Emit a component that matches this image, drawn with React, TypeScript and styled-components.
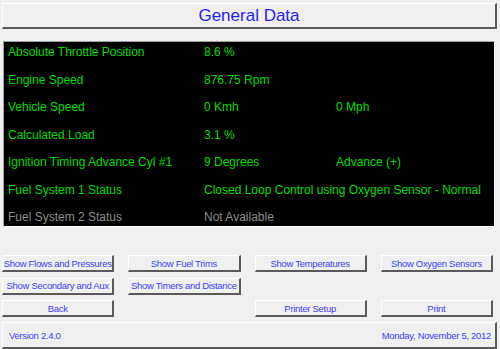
import styled, { createGlobalStyle } from "styled-components";

const GlobalStyle = createGlobalStyle`
  html, body {
    margin: 0;
    padding: 0;
    background: #f0f0f0;
    font-family: "Liberation Sans", Arial, sans-serif;
  }
`;

const Page = styled.div`
  width: 500px;
  height: 349px;
  box-sizing: border-box;
  padding: 3px 3px 0 2px;
  display: flex;
  flex-direction: column;
  overflow: hidden;
`;

const Raised = styled.div`
  box-sizing: border-box;
  background: #f0f0f0;
  border-top: 1px solid #ffffff;
  border-left: 1px solid #ffffff;
  border-right: 2px solid #5a5a5a;
  border-bottom: 2px solid #5a5a5a;
`;

const Header = styled(Raised)`
  height: 26px;
  display: flex;
  align-items: center;
  justify-content: center;
  color: #1f1fff;
  font-size: 17px;
`;

const Panel = styled.div`
  margin: 12px 2px 0 1px;
  height: 186px;
  box-sizing: border-box;
  background: #000;
  border-top: 1px solid #a0a0a0;
  border-left: 1px solid #a0a0a0;
  border-right: 1px solid #ffffff;
  border-bottom: 1px solid #ffffff;
  padding: 1px 0 0 4px;
  display: grid;
  grid-template-columns: 196px 132px 1fr;
  grid-auto-rows: 18px;
  row-gap: 9.5px;
  align-content: start;
`;

const Cell = styled.div<{ $dim?: boolean; $span?: boolean }>`
  font-size: 12px;
  line-height: 18px;
  white-space: nowrap;
  color: ${(p) => (p.$dim ? "#8c8c8c" : "#00dc00")};
  grid-column: ${(p) => (p.$span ? "span 2" : "auto")};
`;

const Buttons = styled.div`
  margin: 28px 4px 0 0;
  display: grid;
  grid-template-columns: repeat(4, 1fr);
  grid-auto-rows: 17px;
  column-gap: 14px;
  row-gap: 5.5px;
`;

const Button = styled(Raised)<{ $col: number; $row: number }>`
  grid-column: ${(p) => p.$col};
  grid-row: ${(p) => p.$row};
  display: flex;
  align-items: center;
  justify-content: center;
  font-size: 9.5px;
  letter-spacing: -0.3px;
  color: #4040ff;
  white-space: nowrap;
`;

const Footer = styled(Raised)`
  margin-top: 5px;
  height: 27px;
  display: flex;
  align-items: center;
  justify-content: space-between;
  padding: 0 4px 0 6px;
  font-size: 9.5px;
  letter-spacing: -0.3px;
  color: #4040ff;
`;

const rows: { label: string; value: string; extra?: string; dim?: boolean }[] = [
  { label: "Absolute Throttle Position", value: "8.6 %" },
  { label: "Engine Speed", value: "876.75 Rpm" },
  { label: "Vehicle Speed", value: "0 Kmh", extra: "0 Mph" },
  { label: "Calculated Load", value: "3.1 %" },
  { label: "Ignition Timing Advance Cyl #1", value: "9 Degrees", extra: "Advance (+)" },
  { label: "Fuel System 1 Status", value: "Closed Loop Control using Oxygen Sensor - Normal" },
  { label: "Fuel System 2 Status", value: "Not Available", dim: true },
];

const buttons = [
  { text: "Show Flows and Pressures", col: 1, row: 1 },
  { text: "Show Fuel Trims", col: 2, row: 1 },
  { text: "Show Temperatures", col: 3, row: 1 },
  { text: "Show Oxygen Sensors", col: 4, row: 1 },
  { text: "Show Secondary and Aux", col: 1, row: 2 },
  { text: "Show Timers and Distance", col: 2, row: 2 },
  { text: "Back", col: 1, row: 3 },
  { text: "Printer Setup", col: 3, row: 3 },
  { text: "Print", col: 4, row: 3 },
];

function App() {
  return (
    <Page>
      <GlobalStyle />
      <Header>General Data</Header>
      <Panel>
        {rows.map((r) => [
          <Cell key={r.label} $dim={r.dim}>
            {r.label}
          </Cell>,
          <Cell key={r.label + "-v"} $dim={r.dim} $span={!r.extra}>
            {r.value}
          </Cell>,
          r.extra ? (
            <Cell key={r.label + "-x"} $dim={r.dim}>
              {r.extra}
            </Cell>
          ) : null,
        ])}
      </Panel>
      <Buttons>
        {buttons.map((b) => (
          <Button key={b.text} $col={b.col} $row={b.row}>
            {b.text}
          </Button>
        ))}
      </Buttons>
      <Footer>
        <span>Version 2.4.0</span>
        <span>Monday, November 5, 2012</span>
      </Footer>
    </Page>
  );
}

export default App;
